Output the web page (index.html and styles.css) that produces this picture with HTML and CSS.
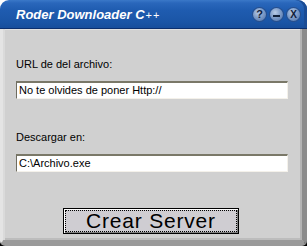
FILE: index.html
```html
<!DOCTYPE html>
<html>
<head>
<meta charset="utf-8">
<link rel="stylesheet" href="styles.css">
</head>
<body>
<div class="window">
  <div class="titlebar">
    <span class="title">Roder Downloader C<span class="plus">++</span></span>
    <div class="controls">
      <span class="cbtn">?</span>
      <span class="cbtn"><span class="dash"></span></span>
      <span class="cbtn x">X</span>
    </div>
  </div>
  <div class="body">
    <div class="label first">URL de del archivo:</div>
    <div class="field">No te olvides de poner Http://</div>
    <div class="label second">Descargar en:</div>
    <div class="field">C:\Archivo.exe</div>
    <div class="btnrow">
      <div class="button"><span class="focus">Crear Server</span></div>
    </div>
  </div>
</div>
</body>
</html>
```
FILE: styles.css
```css
html, body {
  margin: 0;
  padding: 0;
  background: #ffffff;
}
.window {
  width: 307px;
  height: 246px;
  display: flex;
  flex-direction: column;
  background: linear-gradient(#ffffff 50%, #000000 50%);
}
.titlebar {
  height: 28px;
  border-bottom: 1px solid #0b2f6e;
  border-radius: 9px 9px 0 0;
  background: linear-gradient(#3a78c8 0px, #2a67bb 3px, #1f5cb0 10px, #1a55a6 22px, #174e9c 28px);
  display: flex;
  align-items: center;
  padding: 0 7px 0 16px;
  box-shadow: inset -3px 0 0 #1a4c95;
}
.title {
  font-family: "Liberation Sans", Arial, sans-serif;
  font-weight: bold;
  font-style: italic;
  font-size: 13px;
  color: #ffffff;
  margin-top: 1px;
}
.plus {
  font-size: 11px;
  font-weight: normal;
  font-style: normal;
  letter-spacing: 1px;
  margin-left: 1px;
}
.controls {
  margin-left: auto;
  display: flex;
  gap: 4px;
  margin-top: 1px;
}
.cbtn {
  width: 13px;
  height: 13px;
  border-radius: 50%;
  background: radial-gradient(circle at 40% 35%, #b8cbe6 0%, #7e9cc8 45%, #4d6fa5 100%);
  box-shadow: 0 0 0 1px #284f8c;
  display: flex;
  align-items: center;
  justify-content: center;
  font-family: "Liberation Sans", Arial, sans-serif;
  font-weight: bold;
  font-size: 11px;
  color: #10203a;
  line-height: 1;
}
.cbtn.x {
  font-size: 10px;
}
.dash {
  width: 7px;
  height: 2px;
  background: #10203a;
  margin-top: 2px;
}
.body {
  flex: 1;
  background: #d0d0d0;
  border-left: 3px solid #e4e4e4;
  border-right: 5px solid #8c8c8c;
  border-bottom: 6px solid #9a9a9a;
  border-radius: 0 0 5px 5px;
  box-shadow: inset 2px 0 0 #dadada, inset -2px 0 0 #b4b4b4, inset 0 -2px 0 #bcbcbc, inset 0 1px 0 #e0e0e0;
  padding: 0 14px 0 13px;
  display: flex;
  flex-direction: column;
  font-family: "Liberation Sans", Arial, sans-serif;
  font-size: 11px;
  color: #000000;
}
.label {
  line-height: 13px;
  height: 13px;
}
.label.first {
  margin-top: 29px;
}
.label.second {
  margin-top: 32px;
}
.field {
  margin-top: 10px;
  height: 15px;
  border-top: 2px solid #7a7868;
  border-left: 1px solid #6e6c60;
  border-right: 1px solid #f4f1ea;
  border-bottom: 1px solid #f4f1ea;
  background: #ffffff;
  padding: 0 0 0 2px;
  line-height: 15px;
  white-space: nowrap;
  overflow: hidden;
}
.btnrow {
  display: flex;
  justify-content: center;
  margin-top: 36px;
  padding-right: 2px;
}
.button {
  width: 172px;
  height: 22px;
  border: 1px solid #000000;
  box-shadow: inset 1px 1px 0 #ffffff, inset -1px -1px 0 #808080;
  background: #cfcdd2;
  padding: 1px;
  display: flex;
}
.focus {
  flex: 1;
  border: 1px dotted #000000;
  font-size: 21px;
  line-height: 20px;
  height: 20px;
  text-align: center;
  color: #000000;
  letter-spacing: 0.8px;
}
```
